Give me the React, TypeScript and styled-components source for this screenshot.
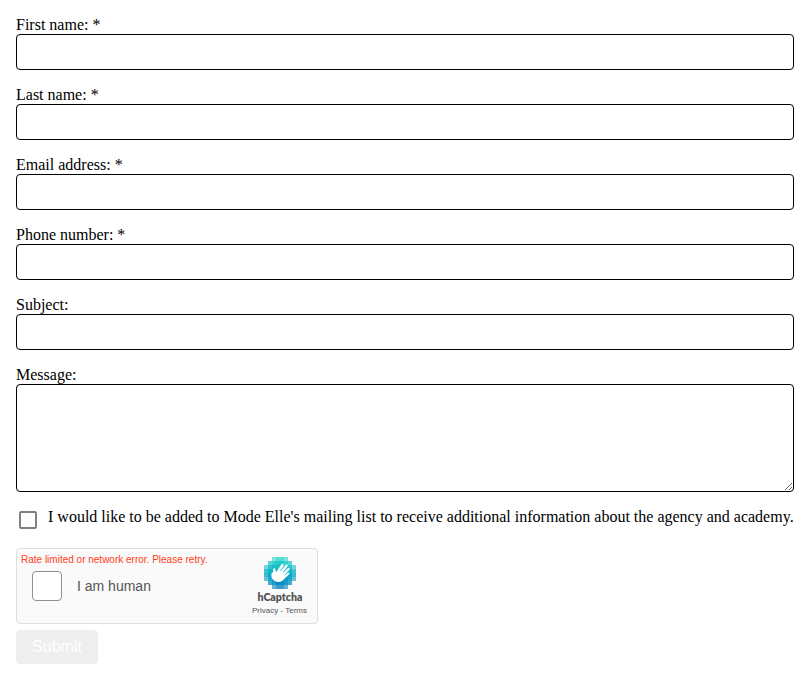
import React from 'react';
import styled, { createGlobalStyle } from 'styled-components';

const GlobalStyle = createGlobalStyle`
  * { box-sizing: border-box; }
  body {
    margin: 0;
    background: #fff;
    color: #000;
    font: 16px/18px "Liberation Serif", "Times New Roman", serif;
  }
`;

const Form = styled.form`
  display: flex;
  flex-direction: column;
  align-items: stretch;
  padding: 16px;
`;

const Field = styled.label`
  display: flex;
  flex-direction: column;
  margin-bottom: 16px;
`;

const LabelText = styled.span`
  height: 18px;
`;

const Input = styled.input`
  height: 36px;
  padding: 8px;
  border: 1px solid #000;
  border-radius: 4px;
  background: #fff;
  font: inherit;
  outline: none;
`;

const TextArea = styled.textarea`
  height: 108px;
  padding: 8px;
  border: 1px solid #000;
  border-radius: 4px;
  background: #fff;
  font: inherit;
  outline: none;
  resize: vertical;
`;

const OptIn = styled.label`
  display: flex;
  height: 40px;
  padding-left: 3px;
  white-space: nowrap;
`;

const Checkbox = styled.input`
  appearance: none;
  flex: none;
  width: 18px;
  height: 18px;
  margin: 3px 11px 0 0;
  border: 2px solid #808080;
  border-radius: 2px;
  background: #fff;
`;

const Captcha = styled.div`
  display: flex;
  justify-content: space-between;
  width: 302px;
  height: 76px;
  border: 1px solid #e0e0e0;
  border-radius: 4px;
  background: #fafafa;
  font-family: "Liberation Sans", Arial, sans-serif;
  color: #555;
`;

const Challenge = styled.div`
  padding: 5px 0 0 4px;
`;

const ErrorText = styled.div`
  height: 17px;
  font-size: 10px;
  line-height: 12px;
  color: #ff3d17;
  white-space: nowrap;
`;

const HumanRow = styled.label`
  display: flex;
  align-items: center;
  gap: 15px;
  height: 30px;
  padding-left: 11px;
  font-size: 14px;
`;

const HumanBox = styled.span`
  width: 30px;
  height: 30px;
  border: 1px solid #919191;
  border-radius: 4px;
  background: #fff;
`;

const Brand = styled.div`
  display: flex;
  flex-direction: column;
  align-items: center;
  width: 74px;
  padding-top: 8px;
`;

const Logo = styled.svg`
  display: block;
  flex: none;
`;

const BrandName = styled.span`
  margin-top: 2px;
  font: 800 10.6px/12px Lato, sans-serif;
`;

const Policy = styled.span`
  margin-top: 3px;
  margin-right: 1px;
  font-size: 8px;
  line-height: 10px;
  white-space: nowrap;
`;

const Submit = styled.button`
  align-self: flex-start;
  width: 82px;
  height: 34px;
  margin-top: 6px;
  padding: 0;
  border: 0;
  border-radius: 4px;
  background: #eee;
  color: #fff;
  font: 16px/34px "Liberation Sans", Arial, sans-serif;
`;

const fields = ['First name: *', 'Last name: *', 'Email address: *', 'Phone number: *', 'Subject:'];

const rowColors = ['#28d6ca', '#20cbcc', '#18c1ca', '#10b5c8', '#0aa9c8', '#079cc6', '#078dc2', '#087ebd'];
const opacities = [
  [0, 0, 0.6, 0.8, 0.8, 0.6, 0, 0],
  [0, 0.75, 0.9, 1, 1, 0.9, 0.75, 0],
  [0.6, 0.9, 1, 1, 1, 1, 0.9, 0.6],
  [0.8, 1, 1, 1, 1, 1, 1, 0.8],
  [0.8, 1, 1, 1, 1, 1, 1, 0.8],
  [0.6, 0.9, 1, 1, 1, 1, 0.9, 0.6],
  [0, 0.75, 0.9, 1, 1, 0.9, 0.75, 0],
  [0, 0, 0.6, 0.8, 0.8, 0.6, 0, 0],
];

const HandLogo = () => (
  <Logo width="32" height="32" viewBox="0 0 32 32" aria-hidden="true">
    {opacities.map((row, y) =>
      row.map((opacity, x) =>
        opacity ? (
          <rect key={`${x}-${y}`} x={x * 4} y={y * 4} width="4" height="4" fill={rowColors[y]} fillOpacity={opacity} shapeRendering="crispEdges" />
        ) : null,
      ),
    )}
    <path
      d="M9.3 15.2Q8.5 11.9 9.6 11.3Q11 10.6 11.7 13.5L12.4 15L17.3 7.6Q18.3 6.2 19.4 7.1Q20.2 7.8 19.4 9L16.1 14L16.6 14.3L21.3 8.2Q22.4 6.9 23.4 7.8Q24.2 8.6 23.3 9.8L18.7 15.4L19.1 15.8L23.5 11.4Q24.8 10.3 25.5 11.3Q26 12 25.2 12.9L20.5 17.9L20.9 18.3L23.7 15.8Q24.8 15.1 25.3 15.9Q25.8 16.7 24.9 17.6L18.7 23.4Q15.5 26.3 11.5 24.3Q7.6 22.2 7.3 18.7Q7.1 16.6 8.1 15.5Z"
      fill="#fff"
    />
  </Logo>
);

export default function App() {
  return (
    <>
      <GlobalStyle />
      <Form>
        {fields.map((label) => (
          <Field key={label}>
            <LabelText>{label}</LabelText>
            <Input />
          </Field>
        ))}
        <Field>
          <LabelText>Message:</LabelText>
          <TextArea />
        </Field>
        <OptIn>
          <Checkbox type="checkbox" />
          <span>I would like to be added to Mode Elle's mailing list to receive additional information about the agency and academy.</span>
        </OptIn>
        <Captcha>
          <Challenge>
            <ErrorText>Rate limited or network error. Please retry.</ErrorText>
            <HumanRow>
              <HumanBox />
              I am human
            </HumanRow>
          </Challenge>
          <Brand>
            <HandLogo />
            <BrandName>hCaptcha</BrandName>
            <Policy>Privacy - Terms</Policy>
          </Brand>
        </Captcha>
        <Submit type="button">Submit</Submit>
      </Form>
    </>
  );
}
